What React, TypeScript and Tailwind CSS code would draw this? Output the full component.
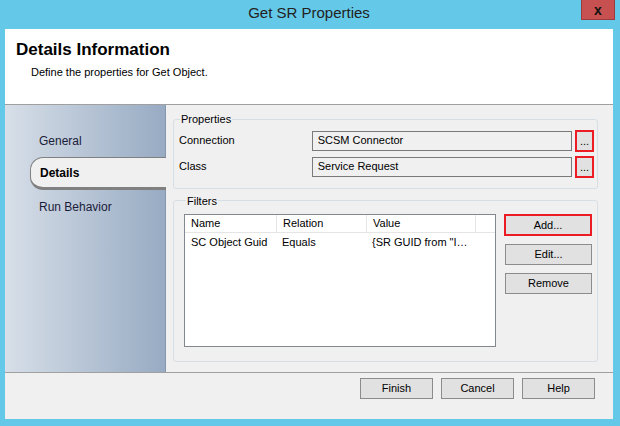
import React from "react";

const font = { fontFamily: '"Liberation Sans", Arial, sans-serif' };

const Btn = ({ label, red = false, className = "" }: { label: string; red?: boolean; className?: string }) => (
  <div
    className={`flex items-center justify-center bg-[#e1e1e1] text-[11px] text-black ${
      red ? "border-2 border-[#ec1c24]" : "border border-[#8c8c8c]"
    } ${className}`}
  >
    {label}
  </div>
);

const Field = ({ label, value }: { label: string; value: string }) => (
  <div className="flex h-[22px] items-center">
    <div className="w-[133px] text-[11px] text-black">{label}</div>
    <div className="flex h-[20px] w-[261px] items-center border border-[#7a7a7a] bg-[#f0f0f0] pl-[5px] text-[11px] text-black">
      {value}
    </div>
    <div className="ml-[3px] flex h-[22px] w-[19px] items-end justify-center border-2 border-[#ec1c24] bg-[#e1e1e1] pb-[3px] text-[11px] leading-none">
      ...
    </div>
  </div>
);

export default function App() {
  const nav = ["General", "Details", "Run Behavior"];
  const columns = [
    { name: "Name", w: "w-[92px]" },
    { name: "Relation", w: "w-[90px]" },
    { name: "Value", w: "w-[109px]" },
  ];

  return (
    <div style={font} className="flex h-[426px] w-[620px] flex-col bg-[#64c8e9] pb-[7px] pl-[5px] pr-[7px]">
      {/* title bar */}
      <div className="relative flex h-[29px] shrink-0 items-center justify-center pb-[3px] text-[15px] text-[#222]">
        Get SR Properties
        <div className="absolute right-[-2px] top-0 flex h-[20px] w-[34px] items-center justify-center border border-t-0 border-[#9c3b3b] bg-[#c75050] text-[14px] font-bold leading-none text-[#111]">
          x
        </div>
      </div>

      <div className="flex flex-1 flex-col bg-white">
        {/* header */}
        <div className="h-[76px] shrink-0 border-b border-[#a0a0a0] pl-[11px] pt-[11px]">
          <div className="text-[17px] font-bold leading-[20px] text-black">Details Information</div>
          <div className="ml-[15px] mt-[4px] text-[11px] text-black">Define the properties for Get Object.</div>
        </div>

        {/* body */}
        <div className="flex h-[267px] shrink-0">
          <div className="flex w-[161px] shrink-0 flex-col border-r border-[#8497ad] bg-gradient-to-r from-[#d7dfe8] to-[#98abc3] pt-[19px]">
            {nav.map((item) =>
              item === "Details" ? (
                <div
                  key={item}
                  className="relative z-10 -mr-[1px] ml-[25px] flex h-[33px] items-center rounded-l-[13px] border-b-[3px] border-l border-t border-[#808080] bg-[#f0f0f0] pl-[9px] text-[12px] font-bold text-black"
                >
                  {item}
                </div>
              ) : (
                <div key={item} className="flex h-[33px] items-center pl-[34px] text-[12px] text-[#1b1b3a]">
                  {item}
                </div>
              )
            )}
          </div>

          <div className="flex min-w-0 flex-1 flex-col gap-[4px] bg-[#f0f0f0] pl-[7px] pr-[15px] pt-[6px]">
            <fieldset className="min-w-0 rounded-[3px] border border-[#d5dfe5] pb-[10px] pl-[5px] pr-[3px]">
              <legend className="ml-[1px] px-[1px] text-[11px] text-black">Properties</legend>
              <div className="mt-[2px] flex flex-col gap-[4px]">
                <Field label="Connection" value="SCSM Connector" />
                <Field label="Class" value="Service Request" />
              </div>
            </fieldset>

            <fieldset className="min-w-0 rounded-[3px] border border-[#d5dfe5] pb-[14px] pl-[10px] pr-[4px]">
              <legend className="ml-[2px] px-[1px] text-[11px] text-black">Filters</legend>
              <div className="mt-[5px] flex">
                <div className="h-[133px] w-[312px] border border-[#828790] bg-white text-[11px] text-black">
                  <div className="flex h-[18px] border-b border-[#e5e5e5]">
                    {columns.map((c) => (
                      <div key={c.name} className={`${c.w} flex items-center border-r border-[#e5e5e5] pl-[6px]`}>
                        {c.name}
                      </div>
                    ))}
                  </div>
                  <div className="flex h-[18px] items-center whitespace-nowrap">
                    <div className="w-[92px] pl-[6px]">SC Object Guid</div>
                    <div className="w-[90px] pl-[5px]">Equals</div>
                    <div className="w-[109px] overflow-hidden pl-[5px]">{"{SR GUID from \"I\u2026"}</div>
                  </div>
                </div>
                <div className="ml-[8px] flex flex-col gap-[8px]">
                  <Btn label="Add..." red className="h-[22px] w-[88px]" />
                  <Btn label="Edit..." className="ml-[1px] h-[21px] w-[87px]" />
                  <Btn label="Remove" className="ml-[1px] h-[21px] w-[87px]" />
                </div>
              </div>
            </fieldset>
          </div>
        </div>

        {/* footer */}
        <div className="flex flex-1 justify-end gap-[8px] border-t border-[#a0a0a0] bg-[#f0f0f0] pr-[18px] pt-[5px]">
          <Btn label="Finish" className="h-[21px] w-[73px]" />
          <Btn label="Cancel" className="h-[21px] w-[73px]" />
          <Btn label="Help" className="h-[21px] w-[73px]" />
        </div>
      </div>
    </div>
  );
}
